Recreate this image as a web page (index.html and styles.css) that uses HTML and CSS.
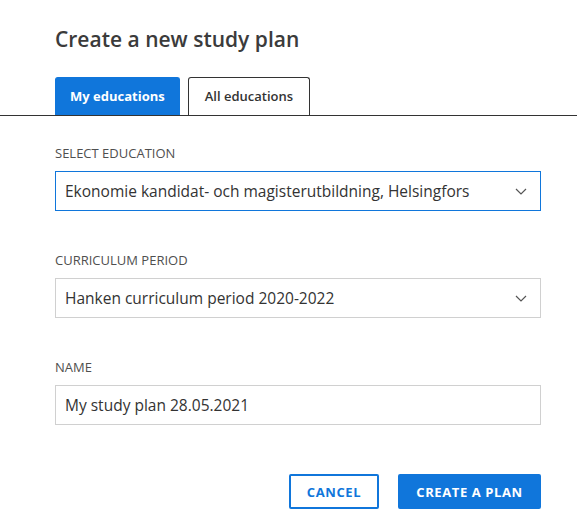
FILE: index.html
```html
<!DOCTYPE html>
<html lang="en">
<head>
<meta charset="utf-8">
<title>Create a new study plan</title>
<link rel="stylesheet" href="styles.css">
</head>
<body>
<div class="dialog">
  <h1 class="title">Create a new study plan</h1>
  <div class="tabs">
    <button class="tab tab-active">My educations</button>
    <button class="tab">All educations</button>
  </div>
  <div class="body">
    <div class="field">
      <div class="label">SELECT EDUCATION</div>
      <div class="control control-focus">
        <span class="value">Ekonomie kandidat- och magisterutbildning, Helsingfors</span>
        <svg class="chevron" width="12" height="7" viewBox="0 0 12 7"><path d="M1 1l5 5 5-5" fill="none" stroke="#555" stroke-width="1.2"/></svg>
      </div>
    </div>
    <div class="field">
      <div class="label">CURRICULUM PERIOD</div>
      <div class="control">
        <span class="value">Hanken curriculum period 2020-2022</span>
        <svg class="chevron" width="12" height="7" viewBox="0 0 12 7"><path d="M1 1l5 5 5-5" fill="none" stroke="#555" stroke-width="1.2"/></svg>
      </div>
    </div>
    <div class="field">
      <div class="label">NAME</div>
      <div class="control">
        <span class="value">My study plan 28.05.2021</span>
      </div>
    </div>
    <div class="actions">
      <button class="btn btn-secondary">CANCEL</button>
      <button class="btn btn-primary">CREATE A PLAN</button>
    </div>
  </div>
</div>
</body>
</html>
```
FILE: styles.css
```css
html, body {
  margin: 0;
  padding: 0;
  background: #fff;
}
body {
  font-family: "Open Sans", "Liberation Sans", sans-serif;
  color: #2a2a2a;
}
.dialog {
  width: 578px;
  height: 527px;
  overflow: hidden;
}
.title {
  margin: 0;
  padding: 23px 0 0 55px;
  font-size: 21px;
  line-height: 32px;
  font-weight: 600;
  color: #3b3b3b;
  height: 77px;
  box-sizing: border-box;
}
.tabs {
  display: flex;
  gap: 8px;
  padding-left: 55px;
  border-bottom: 1px solid #333;
  margin-right: 1px;
}
.tab {
  font-family: inherit;
  height: 38px;
  padding: 0 16px 1px;
  font-size: 13px;
  font-weight: 600;
  white-space: nowrap;
  border: 1px solid #333;
  border-bottom: none;
  border-radius: 3px 3px 0 0;
  background: #fff;
  color: #333;
  cursor: pointer;
}
.tab-active {
  padding: 0 14px 1px;
  background: #1076db;
  border-color: #1076db;
  color: #fff;
  font-weight: 700;
}
.body {
  padding: 27px 37px 0 55px;
}
.field {
  margin-bottom: 39px;
}
.label {
  font-size: 13px;
  line-height: 20px;
  color: #4f4f4f;
  margin-bottom: 8px;
}
.control {
  height: 40px;
  box-sizing: border-box;
  border: 1px solid #d0d0d0;
  display: flex;
  align-items: center;
  padding: 0 13px 0 9px;
  font-size: 15.5px;
  color: #333;
}
.control-focus {
  border-color: #1076db;
}
.value {
  flex: 1;
  white-space: nowrap;
}
.chevron {
  flex: none;
}
.actions {
  display: flex;
  justify-content: flex-end;
  gap: 19px;
  margin-top: 10px;
  padding-top: 10px;
}
.btn {
  font-family: inherit;
  height: 35px;
  font-size: 13px;
  font-weight: 700;
  letter-spacing: 0.6px;
  border-radius: 2px;
  cursor: pointer;
  padding: 0;
}
.btn-secondary {
  width: 90px;
  background: #fff;
  border: 2px solid #1076db;
  color: #1076db;
}
.btn-primary {
  width: 143px;
  background: #1076db;
  border: 2px solid #1076db;
  color: #fff;
}
```
